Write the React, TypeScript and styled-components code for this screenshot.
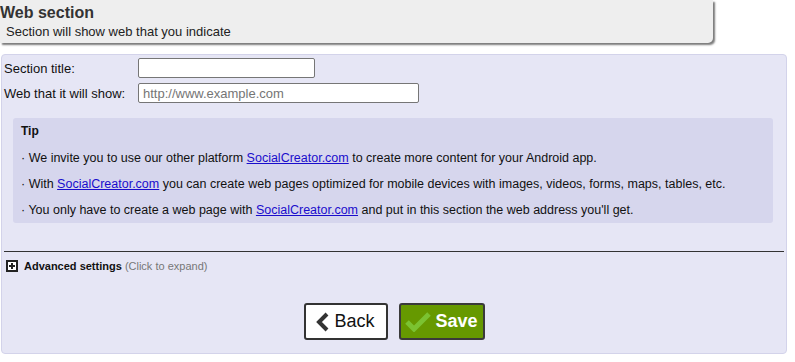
import { createGlobalStyle, styled } from "styled-components";

const GlobalStyle = createGlobalStyle`
  html, body {
    margin: 0;
    padding: 0;
    background: #ffffff;
    font-family: "Liberation Sans", Arial, sans-serif;
    color: #111;
  }
`;

const Page = styled.div`
  display: flex;
  flex-direction: column;
  width: 795px;
`;

const Header = styled.div`
  width: 713px;
  height: 43px;
  box-sizing: border-box;
  background: #eeeeee;
  border-radius: 0 0 5px 0;
  box-shadow: 2px 2px 2px #7a7a7a;
  display: flex;
  flex-direction: column;
  padding: 3px 0 0 0;
`;

const Title = styled.h1`
  margin: 0;
  font-size: 16px;
  line-height: 19px;
  font-weight: bold;
  color: #333;
`;

const Subtitle = styled.div`
  margin: 2px 0 0 6px;
  font-size: 13px;
  line-height: 16px;
  color: #222;
`;

const Panel = styled.div`
  margin: 11px 0 0 1px;
  width: 786px;
  height: 300px;
  box-sizing: border-box;
  background: #e6e6f5;
  border: 1px solid #d3d3ea;
  border-radius: 4px;
  display: flex;
  flex-direction: column;
  padding: 3px 2px 0 2px;
`;

const FormRow = styled.div`
  display: flex;
  align-items: center;
  height: 20px;
  margin-bottom: 5px;
`;

const Label = styled.label`
  width: 134px;
  font-size: 13px;
  color: #111;
`;

const TextInput = styled.input<{ $w: number }>`
  width: ${(p) => p.$w}px;
  height: 20px;
  box-sizing: border-box;
  border: 1px solid #767676;
  border-radius: 2px;
  background: #fff;
  padding: 0 4px;
  font-family: "Liberation Sans", Arial, sans-serif;
  font-size: 13px;
  &::placeholder {
    color: #757575;
  }
`;

const TipBox = styled.div`
  margin: 10px 11px 0 9px;
  background: #d6d6ed;
  border-radius: 3px;
  padding: 6px 8px 5px 8px;
  display: flex;
  flex-direction: column;
  gap: 11px;
  font-size: 12.5px;
  line-height: 15px;
  color: #111;
`;

const TipTitle = styled.div`
  font-weight: bold;
  font-size: 12px;
  margin-bottom: 1px;
`;

const TipLine = styled.div``;

const Link = styled.a`
  color: #1a0dcc;
  text-decoration: underline;
`;

const Divider = styled.hr`
  margin: 28px 0 0 0;
  border: none;
  border-top: 1px solid #333;
  height: 0;
`;

const Advanced = styled.div`
  display: flex;
  align-items: center;
  gap: 6px;
  margin: 8px 0 0 2px;
  font-size: 11px;
`;

const PlusBox = styled.span`
  width: 12px;
  height: 12px;
  box-sizing: border-box;
  border: 2px solid #222;
  display: flex;
  align-items: center;
  justify-content: center;
  background: #fff;
`;

const AdvancedTitle = styled.span`
  font-weight: bold;
  color: #111;
`;

const Hint = styled.span`
  color: #777;
`;

const Buttons = styled.div`
  display: flex;
  justify-content: center;
  gap: 11px;
  margin-top: 31px;
`;

const Button = styled.button<{ $primary?: boolean }>`
  height: 37px;
  box-sizing: border-box;
  display: flex;
  align-items: center;
  justify-content: center;
  gap: 4px;
  border: 2px solid ${(p) => (p.$primary ? "#3a3a3a" : "#333")};
  border-radius: 3px;
  background: ${(p) => (p.$primary ? "#669900" : "#ffffff")};
  color: ${(p) => (p.$primary ? "#ffffff" : "#111")};
  font-family: "Liberation Sans", Arial, sans-serif;
  font-size: 18px;
  font-weight: ${(p) => (p.$primary ? "bold" : "normal")};
  padding: 0;
  cursor: pointer;
`;

const BackButton = styled(Button)`
  width: 84px;
`;

const SaveButton = styled(Button)`
  width: 86px;
`;

export default function App() {
  return (
    <Page>
      <GlobalStyle />
      <Header>
        <Title>Web section</Title>
        <Subtitle>Section will show web that you indicate</Subtitle>
      </Header>
      <Panel>
        <FormRow>
          <Label>Section title:</Label>
          <TextInput $w={177} />
        </FormRow>
        <FormRow>
          <Label>Web that it will show:</Label>
          <TextInput $w={281} placeholder="http://www.example.com" />
        </FormRow>
        <TipBox>
          <TipTitle>Tip</TipTitle>
          <TipLine>
            · We invite you to use our other platform{" "}
            <Link href="#">SocialCreator.com</Link> to create more content for
            your Android app.
          </TipLine>
          <TipLine>
            · With <Link href="#">SocialCreator.com</Link> you can create web
            pages optimized for mobile devices with images, videos, forms, maps,
            tables, etc.
          </TipLine>
          <TipLine>
            · You only have to create a web page with{" "}
            <Link href="#">SocialCreator.com</Link> and put in this section the
            web address you'll get.
          </TipLine>
        </TipBox>
        <Divider />
        <Advanced>
          <PlusBox>
            <svg width="8" height="8" viewBox="0 0 8 8">
              <path d="M4 1v6M1 4h6" stroke="#222" strokeWidth="2" />
            </svg>
          </PlusBox>
          <span>
            <AdvancedTitle>Advanced settings</AdvancedTitle>{" "}
            <Hint>(Click to expand)</Hint>
          </span>
        </Advanced>
        <Buttons>
          <BackButton>
            <svg width="14" height="20" viewBox="0 0 14 20">
              <path
                d="M11 2 L3 10 L11 18"
                fill="none"
                stroke="#333"
                strokeWidth="4"
                strokeLinejoin="miter"
              />
            </svg>
            Back
          </BackButton>
          <SaveButton $primary>
            <svg width="26" height="20" viewBox="0 0 26 20">
              <path
                d="M2 10 L9 17 L24 2"
                fill="none"
                stroke="#7fc93a"
                strokeOpacity="0.85"
                strokeWidth="5"
              />
            </svg>
            Save
          </SaveButton>
        </Buttons>
      </Panel>
    </Page>
  );
}
